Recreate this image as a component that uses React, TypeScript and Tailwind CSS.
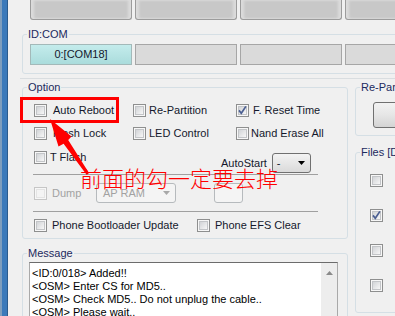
import clsx from "clsx";
import type { ReactNode } from "react";

function Check({ checked, disabled }: { checked?: boolean; disabled?: boolean }) {
  return (
    <span
      className={clsx(
        "flex h-[13px] w-[13px] shrink-0 items-center justify-center border bg-[#f7f7f7]",
        disabled ? "border-[#c6c6c6]" : "border-[#8e8f8f]"
      )}
    >
      <span
        className={clsx(
          "flex h-[9px] w-[9px] items-center justify-center border",
          disabled
            ? "border-[#e4e4e4] bg-[#f4f4f4]"
            : "border-[#c3c5c8] bg-gradient-to-br from-[#d2d4d7] to-[#f7f7f7]"
        )}
      >
        {checked && (
          <svg viewBox="0 0 9 9" className="h-[9px] w-[9px] overflow-visible">
            <path d="M1 4.4 L3.3 7.3 L7.9 0.4" fill="none" stroke="#4b5f92" strokeWidth="1.7" />
          </svg>
        )}
      </span>
    </span>
  );
}

function Item({
  label,
  checked,
  disabled,
  gap,
  className,
}: {
  label: string;
  checked?: boolean;
  disabled?: boolean;
  gap: string;
  className?: string;
}) {
  return (
    <div className={clsx("flex shrink-0 items-center", className)}>
      <Check checked={checked} disabled={disabled} />
      <span className={clsx("whitespace-nowrap", gap, disabled && "text-[#a2a2a2]")}>{label}</span>
    </div>
  );
}

function Group({ title, className, children }: { title: string; className?: string; children: ReactNode }) {
  return (
    <fieldset className={clsx("min-w-0 shrink-0 rounded-[3px] border border-[#d5dfe5]", className)}>
      <legend className="ml-[4px] whitespace-nowrap px-[1px] leading-[13px] text-[#1c2a5e]">{title}</legend>
      {children}
    </fieldset>
  );
}

function Caret({ color }: { color: string }) {
  return (
    <svg viewBox="0 0 7 4" className="h-[4px] w-[7px]">
      <path d="M0 0 H7 L3.5 4 Z" fill={color} />
    </svg>
  );
}

const log = [
  "<ID:0/018> Added!!",
  "<OSM> Enter CS for MD5..",
  "<OSM> Check MD5.. Do not unplug the cable..",
  "<OSM> Please wait..",
];

export default function App() {
  return (
    <div className="relative flex h-[316px] w-[395px] items-start overflow-hidden bg-[#f0f0f0] font-['Liberation_Sans',Arial,sans-serif] text-[11px] leading-[13px] text-[#14182c]">
      {/* window frame edge */}
      <div className="flex shrink-0 self-stretch">
        <div className="w-[2px] bg-[#7f9ebd]" />
        <div className="w-[5px] bg-[#3c7aba]" />
        <div className="w-px bg-[#2b5b8d]" />
      </div>

      <div className="flex w-[500px] shrink-0 flex-col">
        {/* port buttons */}
        <div className="flex h-[20px] shrink-0 gap-[3px] pl-[22px]">
          {[0, 1, 2, 3].map((i) => (
            <div
              key={i}
              className="h-full w-[102px] shrink-0 rounded-b-[3px] border border-t-0 border-[#9c9c9c] bg-[#c8c8c8] shadow-[inset_3px_0_3px_#dcdcdc,inset_-3px_0_3px_#dcdcdc]"
            />
          ))}
        </div>

        <Group title="ID:COM" className="ml-[14px] mt-[8px] w-[460px]">
          <div className="flex gap-[3px] pb-[8px] pl-[7px] pt-[3px]">
            <div className="flex h-[21px] w-[102px] shrink-0 items-center justify-center border border-[#a3b9b9] bg-gradient-to-b from-[#c4ecec] to-[#aadcdc]">
              0:[COM18]
            </div>
            {[0, 1, 2].map((i) => (
              <div key={i} className="h-[21px] w-[102px] shrink-0 border border-[#a6a6a6] bg-[#dadada]" />
            ))}
          </div>
        </Group>

        <div className="ml-[12px] mt-[4px] h-px w-[470px] shrink-0 bg-[#d9dde0]" />

        <div className="mt-[2px] flex shrink-0 items-start">
          {/* left column */}
          <div className="ml-[14px] flex w-[326px] shrink-0 flex-col">
            <Group title="Option">
              <div className="mt-[5px] flex h-[23px] items-center pl-[11px]">
                <Item label="Auto Reboot" gap="ml-[6px]" className="w-[99px]" />
                <Item label="Re-Partition" gap="ml-[3px]" className="w-[103px]" />
                <Item label="F. Reset Time" gap="ml-[4px]" checked />
              </div>
              <div className="flex h-[23px] items-center pl-[11px]">
                <Item label="Flash Lock" gap="ml-[6px]" className="w-[99px]" />
                <Item label="LED Control" gap="ml-[3px]" className="w-[103px]" />
                <Item label="Nand Erase All" gap="ml-[2px]" />
              </div>
              <div className="flex h-[29px] items-start pl-[11px]">
                <Item label="T Flash" gap="ml-[3px]" className="mt-[6px] w-[187px]" />
                <div className="mt-[8px] flex items-center">
                  <span>AutoStart</span>
                  <div className="ml-[5px] flex h-[20px] w-[39px] items-center justify-between rounded-[3px] border border-[#707070] bg-gradient-to-b from-[#f3f3f3] to-[#dadada] pl-[4px] pr-[5px]">
                    <span>-</span>
                    <Caret color="#000" />
                  </div>
                </div>
              </div>
              <div className="ml-[10px] h-px w-[285px] bg-[#a0a0a0]" />
              <div className="flex h-[36px] items-center pl-[11px]">
                <Item label="Dump" gap="ml-[5px]" className="w-[62px]" disabled />
                <div className="flex h-[20px] w-[80px] shrink-0 items-center justify-between rounded-[3px] border border-[#b6babd] bg-[#f4f4f4] pl-[6px] pr-[5px] text-[#a2a2a2]">
                  <span>AP RAM</span>
                  <Caret color="#a8a8a8" />
                </div>
                <div className="ml-[38px] h-[20px] w-[29px] shrink-0 rounded-[3px] border border-[#b6babd] bg-[#f4f4f4]" />
              </div>
              <div className="ml-[10px] h-px w-[285px] bg-[#a0a0a0]" />
              <div className="flex h-[26px] items-center pl-[11px]">
                <Item label="Phone Bootloader Update" gap="ml-[5px]" className="w-[163px]" />
                <Item label="Phone EFS Clear" gap="ml-[5px]" />
              </div>
            </Group>

            <Group title="Message" className="mt-[8px]">
              <div className="ml-[6px] mt-[2px] flex h-[80px] w-[309px] border border-[#a9a9a9] border-t-[#6c6c6c] bg-white">
                <div className="flex-1 pl-[2px] pt-[4px] text-[#000]">
                  {log.map((line) => (
                    <div key={line} className="whitespace-nowrap">
                      {line}
                    </div>
                  ))}
                </div>
                <div className="flex w-[16px] shrink-0 justify-center bg-[#ededed] pt-[8px]">
                  <svg viewBox="0 0 7 4" className="h-[4px] w-[7px]">
                    <path d="M0 4 H7 L3.5 0 Z" fill="#8a8a8a" />
                  </svg>
                </div>
              </div>
            </Group>
          </div>

          {/* right column */}
          <div className="ml-[7px] flex w-[150px] shrink-0 flex-col">
            <Group title="Re-Partition">
              <div className="mb-[7px] ml-[17px] mt-[8px] h-[26px] w-[100px] rounded-[3px] border border-[#707070] bg-gradient-to-b from-[#f2f2f2] via-[#e6e6e6] to-[#d4d4d4]" />
            </Group>
            <Group title="Files [Download]" className="mt-[10px]">
              <div className="flex flex-col gap-[22px] pb-[20px] pl-[14px] pt-[15px]">
                <Check />
                <Check checked />
                <Check />
                <Check />
              </div>
            </Group>
          </div>
        </div>
      </div>

      {/* red annotation */}
      <div className="absolute left-[20px] top-[97px] h-[26px] w-[99px] border-[3px] border-[#ff0000]" />
      <svg viewBox="40 110 60 70" className="absolute left-[40px] top-[110px] h-[70px] w-[60px]">
        <polygon
          points="50,119 71.5,136.5 68.2,140 89,173 86.8,175 63.6,143.8 58.5,146.5"
          fill="#ff0000"
        />
      </svg>
      <div className="absolute left-[80px] top-[166px] whitespace-nowrap font-['Noto_Sans_CJK_SC',sans-serif] text-[22px] font-light leading-[22px] text-[#ff0000]">
        前面的勾一定要去掉
      </div>
    </div>
  );
}
